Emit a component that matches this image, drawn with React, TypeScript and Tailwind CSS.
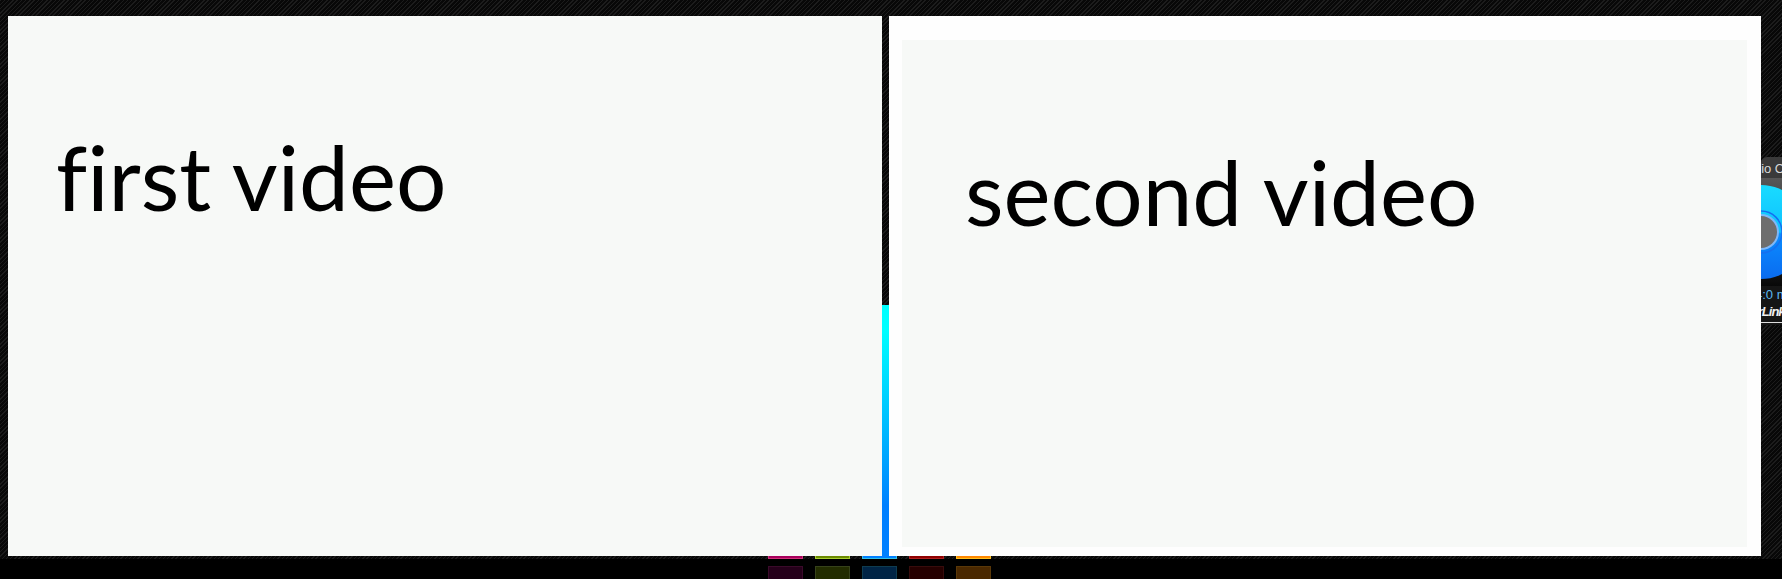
const tiles = [
  { top: 'bg-[#a8005c] border-[#d0307a]', glow: 'bg-[#25001a] border-[#3a0a2a]' },
  { top: 'bg-[#6b8a00] border-[#a8d030]', glow: 'bg-[#222c00] border-[#36421a]' },
  { top: 'bg-[#0080ff] border-[#30c0e8]', glow: 'bg-[#002445] border-[#0e3c50]' },
  { top: 'bg-[#900000] border-[#b02020]', glow: 'bg-[#250000] border-[#380c0c]' },
  { top: 'bg-[#ff8800] border-[#ffc020]', glow: 'bg-[#4a2800] border-[#5a3808]' },
]

function DiscWidget() {
  return (
    <div className="flex h-[168px] w-[21px] flex-col overflow-hidden rounded-tl-md bg-[#3a3a3a] font-['Liberation_Sans',sans-serif]">
      <div className="-ml-[23px] mt-[3px] h-[18px] whitespace-nowrap text-[13px] leading-[18px] text-[#d8d8d8]">Audio Clip</div>
      <svg viewBox="0 0 21 108" className="h-[108px] w-[21px] shrink-0 bg-[#2a2a2a]">
        <defs>
          <linearGradient id="disc" x1="0" y1="0" x2="0" y2="1">
            <stop offset="0" stopColor="#19dcff" />
            <stop offset="0.5" stopColor="#0fc0ff" />
            <stop offset="0.52" stopColor="#0a8cff" />
            <stop offset="1" stopColor="#0a6cf0" />
          </linearGradient>
          <linearGradient id="ring" x1="0" y1="0" x2="0" y2="1">
            <stop offset="0" stopColor="#5a5a5a" />
            <stop offset="0.6" stopColor="#2a2a2a" />
            <stop offset="1" stopColor="#050505" />
          </linearGradient>
        </defs>
        <circle cx="0" cy="54" r="58" fill="url(#ring)" />
        <circle cx="0" cy="54" r="47" fill="url(#disc)" />
        <circle cx="0" cy="54" r="21" fill="none" stroke="#1570f0" strokeWidth="1.5" />
        <circle cx="0" cy="54" r="18" fill="#7fb8f8" />
        <circle cx="0" cy="54" r="16" fill="#6e6e6e" />
      </svg>
      <div className="flex flex-1 flex-col bg-[#151515]">
        <div className="-ml-[6px] mt-[1px] h-[16px] whitespace-nowrap text-[13px] leading-[16px] text-[#5cb8f0]">4:0 min</div>
        <div className="-ml-[31px] w-[60px] whitespace-nowrap border-b border-[#ddd] pb-[2px] text-[13px] font-bold italic leading-[17px] tracking-[-1px] text-[#f0f0f0]">CyberLink</div>
      </div>
    </div>
  )
}

export default function App() {
  return (
    <div className="h-[579px] w-[1782px] overflow-hidden bg-black font-['Lato',sans-serif] text-black [font-variant-ligatures:none]">
      <div className="flex h-[559px] bg-[#101010] bg-[repeating-linear-gradient(135deg,#1c1c1c_0px,#1c1c1c_1px,#080808_1px,#080808_3px)] pl-2 pt-4">
        <div className="h-[540px] w-[874px] bg-[#f7f9f7] pl-[48px] pt-[111px] text-[89px] leading-[100px]">first video</div>
        <div className="flex h-[540px] w-[7px] flex-col">
          <div className="flex-1" />
          <div className="h-[251px] bg-gradient-to-b from-[#00ffff] from-10% to-[#0080ff] to-80%" />
        </div>
        <div className="h-[540px] w-[872px] bg-[#fefefe] pb-[9px] pl-[13px] pr-[14px] pt-[24px]">
          <div className="h-full bg-[#f7f9f7] pl-[63px] pt-[102px] text-[89px] leading-[100px]">second video</div>
        </div>
        <div className="pt-[141px]">
          <DiscWidget />
        </div>
      </div>
      <div className="relative -mt-[3px] flex gap-[12px] pl-[768px]">
        {tiles.map((tile) => (
          <div key={tile.top} className={`h-[3px] w-[35px] border-x border-b ${tile.top}`} />
        ))}
      </div>
      <div className="mt-[7px] flex gap-[12px] pl-[768px]">
        {tiles.map((tile) => (
          <div key={tile.glow} className={`h-[13px] w-[35px] border-x border-t ${tile.glow}`} />
        ))}
      </div>
    </div>
  )
}
